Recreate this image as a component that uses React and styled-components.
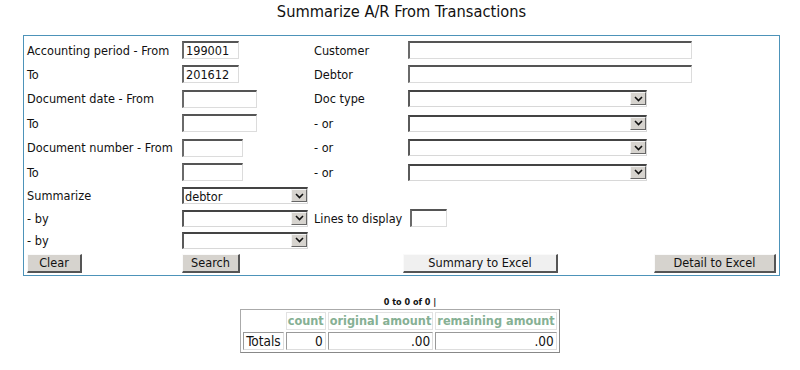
import React from "react";
import styled, { createGlobalStyle } from "styled-components";

const GlobalStyle = createGlobalStyle`
  html, body {
    margin: 0;
    padding: 0;
    background: #fff;
  }
  body {
    font-family: "DejaVu Sans Condensed", "DejaVu Sans", Verdana, sans-serif;
    font-stretch: condensed;
    font-size: 12.6px;
    color: #111;
  }
`;

function Chevron() {
  return (
    <svg width="9" height="6" viewBox="0 0 9 6">
      <path d="M1 1 L4.5 4.5 L8 1" fill="none" stroke="#111" strokeWidth="1.6" />
    </svg>
  );
}

function Dropdown({ width, value }) {
  return (
    <SelectBox width={width}>
      <SelectText>{value}</SelectText>
      <ArrowBox>
        <Chevron />
      </ArrowBox>
    </SelectBox>
  );
}

function App() {
  return (
    <Page>
      <GlobalStyle />
      <Title>Summarize A/R From Transactions</Title>

      <FormBox>
        <Grid>
          <Label>Accounting period - From</Label>
          <Cell>
            <TextInput width={57} defaultValue="199001" />
          </Cell>
          <Label>Customer</Label>
          <Cell>
            <TextInput width={284} />
          </Cell>

          <Label>To</Label>
          <Cell>
            <TextInput width={57} defaultValue="201612" />
          </Cell>
          <Label>Debtor</Label>
          <Cell>
            <TextInput width={284} />
          </Cell>

          <Label>Document date - From</Label>
          <Cell>
            <TextInput width={75} />
          </Cell>
          <Label>Doc type</Label>
          <Cell>
            <Dropdown width={239} />
          </Cell>

          <Label>To</Label>
          <Cell>
            <TextInput width={75} />
          </Cell>
          <Label>- or</Label>
          <Cell>
            <Dropdown width={239} />
          </Cell>

          <Label>Document number - From</Label>
          <Cell>
            <TextInput width={61} />
          </Cell>
          <Label>- or</Label>
          <Cell>
            <Dropdown width={239} />
          </Cell>

          <Label>To</Label>
          <Cell>
            <TextInput width={61} />
          </Cell>
          <Label>- or</Label>
          <Cell>
            <Dropdown width={239} />
          </Cell>

          <Label>Summarize</Label>
          <Cell>
            <Dropdown width={126} value="debtor" />
          </Cell>
          <Label />
          <Cell />

          <Label>- by</Label>
          <Cell>
            <Dropdown width={126} />
          </Cell>
          <Label>Lines to display</Label>
          <Cell>
            <TextInput width={37} offset={2} />
          </Cell>

          <Label>- by</Label>
          <Cell>
            <Dropdown width={126} />
          </Cell>
          <Label />
          <Cell />

          <Cell>
            <Button width={55}>Clear</Button>
          </Cell>
          <Cell>
            <Button width={58}>Search</Button>
          </Cell>
          <ButtonRow>
            <Button width={155} light>
              Summary to Excel
            </Button>
            <Button width={122}>Detail to Excel</Button>
          </ButtonRow>
        </Grid>
      </FormBox>

      <Results>
        <Pager>0 to 0 of 0 |</Pager>
        <Totals>
          <thead>
            <tr>
              <Blank />
              <Head>count</Head>
              <Head>original amount</Head>
              <Head>remaining amount</Head>
            </tr>
          </thead>
          <tbody>
            <tr>
              <Data left>Totals</Data>
              <Data>0</Data>
              <Data>.00</Data>
              <Data>.00</Data>
            </tr>
          </tbody>
        </Totals>
      </Results>
    </Page>
  );
}

export default App;

const Page = styled.div`
  width: 800px;
  height: 370px;
  overflow: hidden;
`;

const Title = styled.h1`
  margin: 0;
  padding-top: 2px;
  height: 33px;
  text-align: center;
  font-size: 16.3px;
  font-weight: normal;
  line-height: 19px;
  padding-left: 3px;
`;

const FormBox = styled.div`
  margin-left: 23px;
  width: 752px;
  border: 1px solid #4d93b9;
  padding: 2px 0 0 3px;
  box-sizing: content-box;
`;

const Grid = styled.div`
  display: grid;
  grid-template-columns: 155px 132px 94px 1fr;
  grid-template-rows: 24px 24px 25px 24px 25px 24px 23px 22px 22px 24px;
`;

const Label = styled.div`
  display: flex;
  align-items: center;
  white-space: nowrap;
`;

const Cell = styled.div`
  display: flex;
  align-items: center;
`;

const ButtonRow = styled.div`
  grid-column: 3 / 5;
  display: flex;
  align-items: center;
  justify-content: space-between;
  padding-left: 89px;
  padding-right: 3px;
`;

const TextInput = styled.input`
  width: ${({ width }) => width}px;
  height: 18px;
  margin-left: ${({ offset }) => offset || 0}px;
  box-sizing: border-box;
  padding: 0 2px;
  font: inherit;
  color: #111;
  background: #fff;
  border-top: 2px solid #555;
  border-left: 2px solid #6a6a6a;
  border-bottom: 1px solid #dcdcdc;
  border-right: 1px solid #dcdcdc;
  outline: none;
`;

const SelectBox = styled.div`
  width: ${({ width }) => width}px;
  height: 17px;
  box-sizing: border-box;
  display: flex;
  align-items: stretch;
  background: #fff;
  border-top: 2px solid #444;
  border-left: 2px solid #5a5a5a;
  border-bottom: 1px solid #d8d8d8;
  border-right: 1px solid #d8d8d8;
`;

const SelectText = styled.span`
  flex: 1;
  padding-left: 1px;
  line-height: 15px;
  overflow: hidden;
`;

const ArrowBox = styled.span`
  width: 16px;
  margin: 0 0 1px 0;
  display: flex;
  align-items: center;
  justify-content: center;
  background: #d6d3ce;
  border-top: 1px solid #f4f4f4;
  border-left: 1px solid #f4f4f4;
  border-right: 1px solid #666;
  border-bottom: 1px solid #666;
  box-sizing: border-box;
`;

const Button = styled.button`
  width: ${({ width }) => width}px;
  height: 19px;
  padding: 0;
  font: inherit;
  color: #111;
  background: ${({ light }) => (light ? "#f0f0f0" : "#d6d3ce")};
  border-top: 1px solid #fafafa;
  border-left: 1px solid #fafafa;
  border-right: 2px solid #555;
  border-bottom: 2px solid #555;
`;

const Results = styled.div`
  margin-top: 20px;
  display: flex;
  flex-direction: column;
  align-items: center;
`;

const Pager = styled.div`
  font-size: 9px;
  font-weight: bold;
  line-height: 13px;
  padding-left: 20px;
`;

const Totals = styled.table`
  border-collapse: separate;
  border-spacing: 2px;
  border: 1px solid #aaa;
  border-right-color: #888;
  border-bottom-color: #888;
`;

const Blank = styled.th`
  width: 37px;
`;

const Head = styled.th`
  height: 16px;
  padding: 0 1px;
  font-size: 12.6px;
  font-weight: bold;
  line-height: 16px;
  color: #86b094;
  white-space: nowrap;
  border: 1px solid #e2e2e2;
`;

const Data = styled.td`
  height: 16px;
  padding: 0 2px;
  font-size: 13.5px;
  line-height: 16px;
  text-align: ${({ left }) => (left ? "left" : "right")};
  border-top: 1px solid #999;
  border-left: 1px solid #999;
  border-right: 1px solid #ddd;
  border-bottom: 1px solid #ddd;
`;
